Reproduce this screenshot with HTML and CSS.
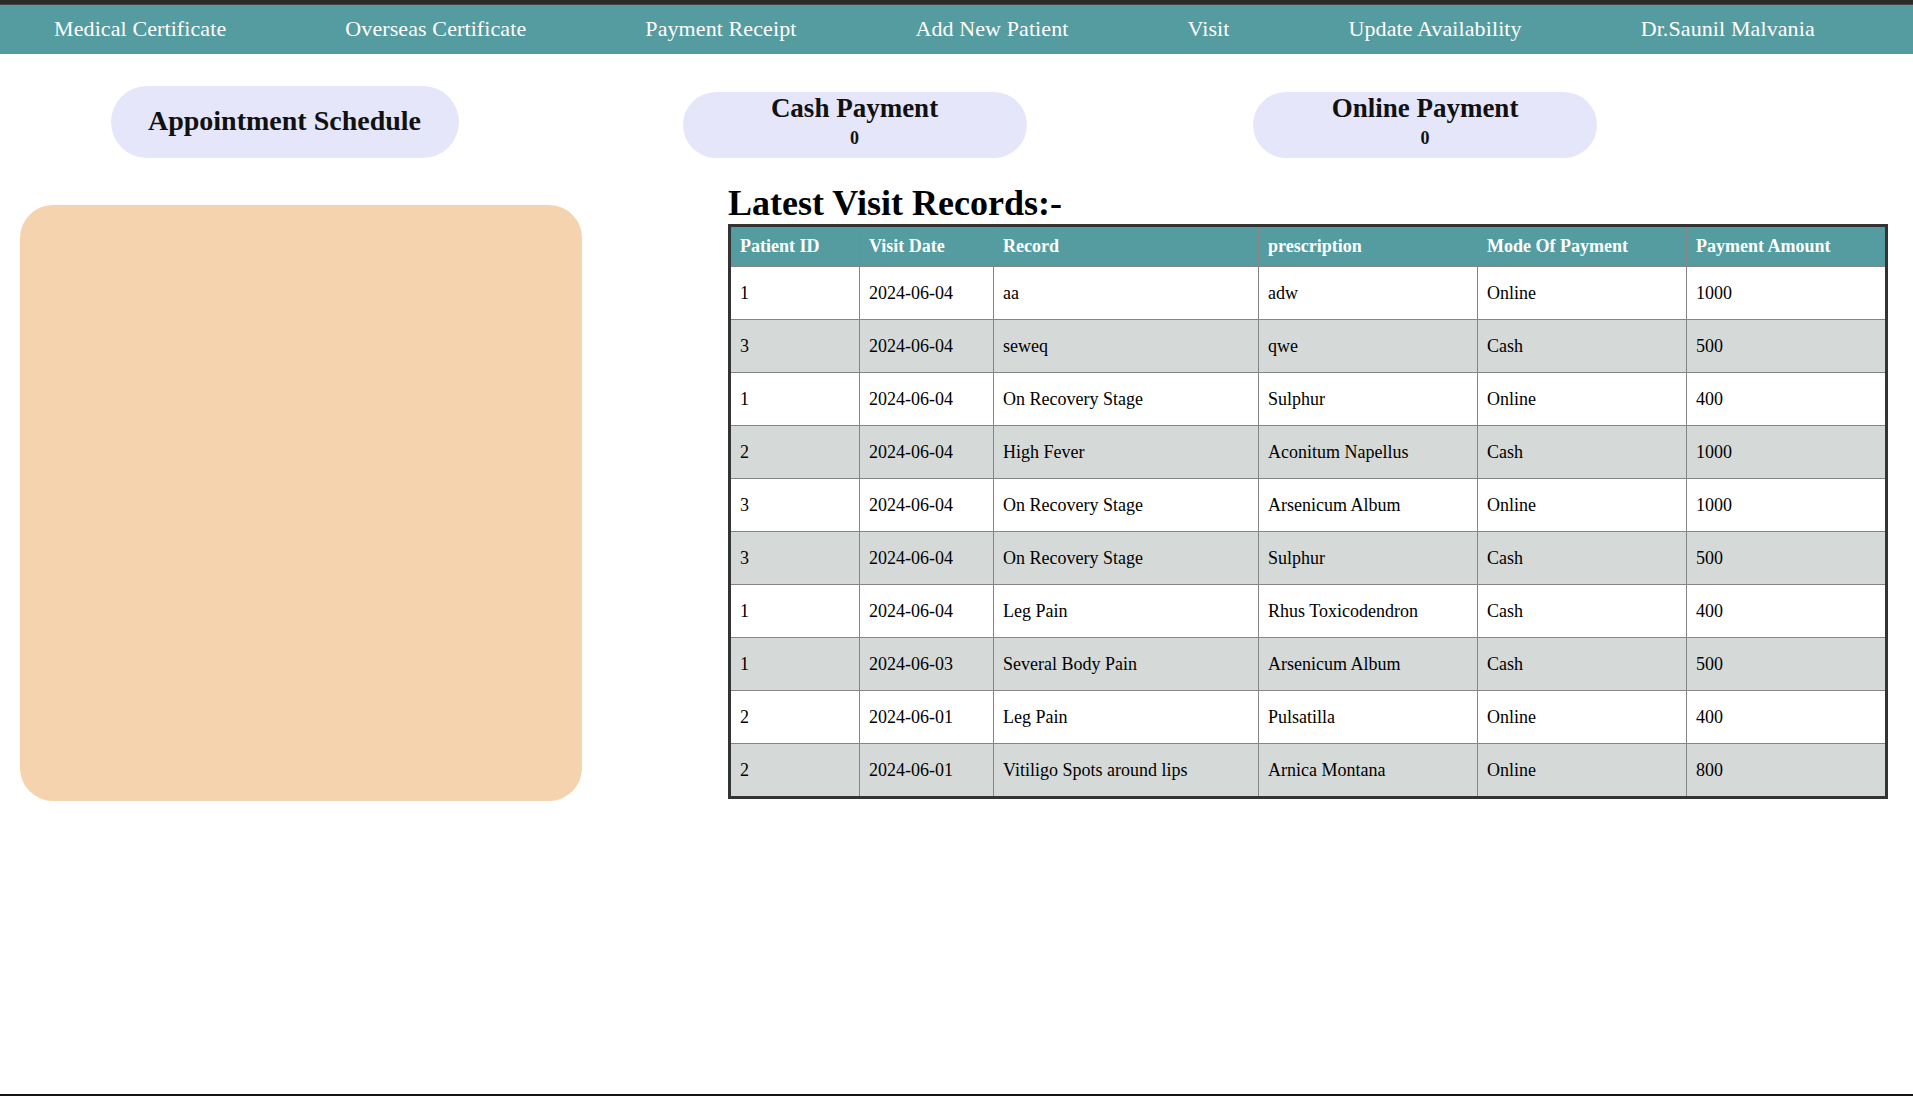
FILE: index.html
```html
<!DOCTYPE html>
<html lang="en">
<head>
<meta charset="utf-8">
<title>Dashboard</title>
<link rel="stylesheet" href="styles.css">
</head>
<body>
<div class="page">
  <header class="topbar">
    <nav class="nav">
      <a class="nav-link" href="#">Medical Certificate</a>
      <a class="nav-link" href="#">Overseas Certificate</a>
      <a class="nav-link" href="#">Payment Receipt</a>
      <a class="nav-link" href="#">Add New Patient</a>
      <a class="nav-link" href="#">Visit</a>
      <a class="nav-link" href="#">Update Availability</a>
      <a class="nav-link" href="#">Dr.Saunil Malvania</a>
    </nav>
  </header>

  <section class="summary">
    <div class="summary-cell">
      <div class="pill pill-schedule">Appointment Schedule</div>
    </div>
    <div class="summary-cell">
      <div class="pill pill-pay">
        <div class="pay-title">Cash Payment</div>
        <div class="pay-value">0</div>
      </div>
    </div>
    <div class="summary-cell">
      <div class="pill pill-pay">
        <div class="pay-title">Online Payment</div>
        <div class="pay-value">0</div>
      </div>
    </div>
  </section>

  <main class="content">
    <div class="schedule-box"></div>
    <section class="records">
      <h1 class="records-title">Latest Visit Records:-</h1>
      <table class="records-table">
        <colgroup>
          <col class="c1"><col class="c2"><col class="c3"><col class="c4"><col class="c5"><col class="c6">
        </colgroup>
        <thead>
          <tr><th>Patient ID</th><th>Visit Date</th><th>Record</th><th>prescription</th><th>Mode Of Payment</th><th>Payment Amount</th></tr>
        </thead>
        <tbody>
          <tr><td>1</td><td>2024-06-04</td><td>aa</td><td>adw</td><td>Online</td><td>1000</td></tr>
          <tr><td>3</td><td>2024-06-04</td><td>seweq</td><td>qwe</td><td>Cash</td><td>500</td></tr>
          <tr><td>1</td><td>2024-06-04</td><td>On Recovery Stage</td><td>Sulphur</td><td>Online</td><td>400</td></tr>
          <tr><td>2</td><td>2024-06-04</td><td>High Fever</td><td>Aconitum Napellus</td><td>Cash</td><td>1000</td></tr>
          <tr><td>3</td><td>2024-06-04</td><td>On Recovery Stage</td><td>Arsenicum Album</td><td>Online</td><td>1000</td></tr>
          <tr><td>3</td><td>2024-06-04</td><td>On Recovery Stage</td><td>Sulphur</td><td>Cash</td><td>500</td></tr>
          <tr><td>1</td><td>2024-06-04</td><td>Leg Pain</td><td>Rhus Toxicodendron</td><td>Cash</td><td>400</td></tr>
          <tr><td>1</td><td>2024-06-03</td><td>Several Body Pain</td><td>Arsenicum Album</td><td>Cash</td><td>500</td></tr>
          <tr><td>2</td><td>2024-06-01</td><td>Leg Pain</td><td>Pulsatilla</td><td>Online</td><td>400</td></tr>
          <tr><td>2</td><td>2024-06-01</td><td>Vitiligo Spots around lips</td><td>Arnica Montana</td><td>Online</td><td>800</td></tr>
        </tbody>
      </table>
    </section>
  </main>
</div>
</body>
</html>
```

FILE: styles.css
```css
* { box-sizing: border-box; }

html, body {
  margin: 0;
  padding: 0;
  background: #ffffff;
}

body {
  font-family: "Liberation Serif", "Times New Roman", serif;
  color: #000;
}

.page {
  min-height: 100vh;
  border-bottom: 2px solid #151515;
}

.topbar {
  border-top: 4px solid #2b2b2b;
}

.nav {
  display: flex;
  gap: 119px;
  height: 50px;
  padding: 0 0 2px 54px;
  border-top: 1px solid #474747;
  background: #549c9f;
  align-items: center;
}

.nav-link {
  font-family: "Liberation Serif", "Times New Roman", serif;
  font-size: 22px;
  line-height: 46px;
  letter-spacing: 0.1px;
  color: #ffffff;
  text-decoration: none;
  white-space: nowrap;
}

.summary {
  display: grid;
  grid-template-columns: 569px 571px 570px;
  align-items: end;
  justify-items: center;
  margin-top: 32px;
}

.pill {
  background: #e6e6fa;
  border-radius: 999px;
  text-align: center;
  font-weight: bold;
  color: #111;
}

.pill-schedule {
  width: 348px;
  height: 72px;
  font-size: 28px;
  line-height: 70px;
  padding-bottom: 2px;
}

.pill-pay {
  width: 344px;
  height: 66px;
  padding-top: 2px;
}

.pay-title {
  font-size: 27px;
  line-height: 28px;
}

.pay-value {
  font-size: 18px;
  line-height: 24px;
  margin-top: 4px;
}

.content {
  display: flex;
  align-items: flex-start;
  padding-left: 20px;
  margin-top: 25px;
}

.schedule-box {
  width: 562px;
  height: 596px;
  margin-top: 22px;
  background: #f4d3ae;
  border-radius: 33px;
  flex: none;
}

.records {
  margin-left: 146px;
  width: 1160px;
  flex: none;
}

.records-title {
  margin: 0 0 1px 0;
  font-size: 36px;
  line-height: 40px;
  font-weight: bold;
}

.records-table {
  width: 1160px;
  table-layout: fixed;
  border-collapse: separate;
  border-spacing: 0;
  border: 3px solid #333333;
  font-size: 18px;
}

.c1 { width: 129px; }
.c2 { width: 134px; }
.c3 { width: 265px; }
.c4 { width: 219px; }
.c5 { width: 209px; }
.c6 { width: 198px; }

.records-table th,
.records-table td {
  text-align: left;
  vertical-align: top;
  line-height: 21px;
  border-right: 1px solid #858585;
  border-bottom: 1px solid #858585;
  white-space: nowrap;
  overflow: hidden;
}

.records-table th:last-child,
.records-table td:last-child {
  border-right: none;
}

.records-table tbody tr:last-child td {
  border-bottom: none;
}

.records-table th {
  background: #549c9f;
  color: #ffffff;
  font-weight: bold;
  padding: 9px 9px 9px 9px;
}

.records-table td {
  padding: 16px 9px 15px 9px;
  background: #ffffff;
}

.records-table tbody tr:nth-child(even) td {
  background: #d5dad9;
}
```
